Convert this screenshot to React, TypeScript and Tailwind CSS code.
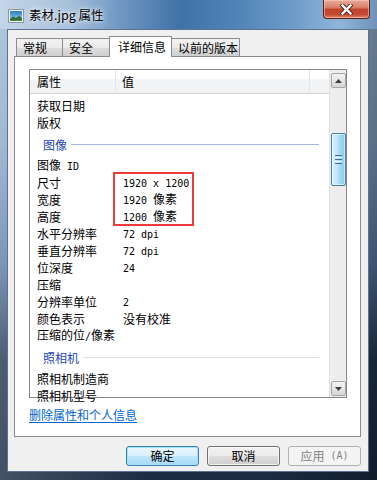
import React from "react";

type Item = { n?: string; v?: string; g?: string };

const items: Item[] = [
  { n: "获取日期" },
  { n: "版权" },
  { g: "图像" },
  { n: "图像 ID" },
  { n: "尺寸", v: "1920 x 1200" },
  { n: "宽度", v: "1920 像素" },
  { n: "高度", v: "1200 像素" },
  { n: "水平分辨率", v: "72 dpi" },
  { n: "垂直分辨率", v: "72 dpi" },
  { n: "位深度", v: "24" },
  { n: "压缩" },
  { n: "分辨率单位", v: "2" },
  { n: "颜色表示", v: "没有校准" },
  { n: "压缩的位/像素" },
  { g: "照相机" },
  { n: "照相机制造商" },
  { n: "照相机型号" },
];

function Mix({ s }: { s: string }) {
  const parts = s.split(/([\x20-\x7e]+)/).filter((p) => p.length > 0);
  return (
    <>
      {parts.map((p, i) =>
        /^[\x20-\x7e]+$/.test(p) ? (
          <span key={i} className="font-['DejaVu_Sans_Mono',monospace] text-[10px] whitespace-pre">
            {p}
          </span>
        ) : (
          <span key={i}>{p}</span>
        )
      )}
    </>
  );
}

function TitleIcon() {
  return (
    <svg width="16" height="14" viewBox="0 0 16 14">
      <rect x="0.5" y="0.5" width="15" height="13" fill="#f4f6f8" stroke="#8a96a3" />
      <defs>
        <linearGradient id="sky" x1="0" y1="0" x2="0" y2="1">
          <stop offset="0" stopColor="#2f7fc4" />
          <stop offset="1" stopColor="#9fd0ef" />
        </linearGradient>
      </defs>
      <rect x="2" y="2" width="12" height="10" fill="url(#sky)" />
      <path d="M2 10 L5 7.5 L8 9 L11 7 L14 9 L14 12 L2 12 Z" fill="#2f6b3a" />
      <path d="M2 11 L14 10.5 L14 12 L2 12 Z" fill="#4d8a3c" />
    </svg>
  );
}

function CloseX() {
  return (
    <svg width="13" height="11" viewBox="0 0 13 11">
      <path d="M2.5 1.5 L10.5 9.5 M10.5 1.5 L2.5 9.5" stroke="#4a2a22" strokeWidth="4.2" strokeLinecap="square" />
      <path d="M2.5 1.5 L10.5 9.5 M10.5 1.5 L2.5 9.5" stroke="#ffffff" strokeWidth="2.4" strokeLinecap="square" />
    </svg>
  );
}

function ArrowBtn({ up }: { up: boolean }) {
  return (
    <div className="h-[17px] w-[17px] p-[1px]">
      <div className="flex h-full w-full items-center justify-center rounded-[2px] border border-[#a5a5a5] bg-[linear-gradient(180deg,#f4f4f4_0%,#e6e6e6_50%,#d6d6d6_100%)]">
        <svg width="7" height="4" viewBox="0 0 7 4">
          {up ? <path d="M0 4 L3.5 0 L7 4 Z" fill="#3f3f3f" /> : <path d="M0 0 L3.5 4 L7 0 Z" fill="#3f3f3f" />}
        </svg>
      </div>
    </div>
  );
}

function Tab({ label, w, selected }: { label: string; w: number; selected?: boolean }) {
  if (selected) {
    return (
      <div
        style={{ width: w }}
        className="relative z-10 -mb-[1px] flex h-[21px] items-start whitespace-nowrap border border-b-0 border-[#898c95] bg-white pl-[8px] pt-[2px] text-[12px] leading-[16px] text-black"
      >
        {label}
      </div>
    );
  }
  return (
    <div
      style={{ width: w }}
      className="-ml-[1px] flex h-[18px] items-center whitespace-nowrap border border-b-0 border-[#898c95] bg-[linear-gradient(180deg,#f2f2f2_0%,#ebebeb_50%,#dddddd_51%,#cfcfcf_100%)] pl-[6px] text-[12px] leading-[16px] text-black first:ml-0"
    >
      {label}
    </div>
  );
}

export default function App() {
  return (
    <div className="relative flex h-[480px] w-[377px] flex-col overflow-hidden bg-[linear-gradient(90deg,rgba(255,255,255,0.18)_0%,rgba(255,255,255,0)_40%,rgba(0,0,0,0)_70%,rgba(0,0,0,0.35)_100%),linear-gradient(180deg,#9fbbd7_0%,#8aaacb_30%,#5f80a8_55%,#263a55_75%,#1b2b42_100%)] font-['Noto_Sans_CJK_SC','Microsoft_YaHei',sans-serif]">
      {/* Title bar */}
      <div className="flex h-[29px] shrink-0 items-start bg-[linear-gradient(90deg,#c3d5e8_0%,#a9c2dc_18%,#6f97c2_32%,#3f72a8_48%,#4f82b6_62%,#6e9cca_78%,#8fb6da_90%,#6f93b8_100%)]">
        <div className="ml-[8px] mt-[9px]">
          <TitleIcon />
        </div>
        <div className="ml-[5px] mt-[6px] text-[12.5px] leading-[17px] text-black [text-shadow:0_0_6px_rgba(255,255,255,0.9),0_0_3px_rgba(255,255,255,0.9)]">
          素材.jpg 属性
        </div>
        <div className="ml-auto mr-[7px] flex h-[19px] w-[47px] items-center justify-center rounded-b-[4px] border border-t-0 border-[#5a2218] bg-[linear-gradient(180deg,#e9ab9a_0%,#d97a64_45%,#c0432b_50%,#c44a31_80%,#e3866b_100%)] shadow-[inset_0_0_0_1px_rgba(255,210,200,0.5)]">
          <CloseX />
        </div>
      </div>

      {/* Client area */}
      <div className="ml-[7px] mr-[8px] flex h-[443px] shrink-0 flex-col border border-[#5d7290] bg-[#f0f0f0] pl-[6px] pr-[8px] pt-[6px]">
        {/* Tabs */}
        <div className="ml-[2px] flex h-[20px] items-end">
          <Tab label="常规" w={47} />
          <Tab label="安全" w={48} />
          <div className="-ml-[1px]">
            <Tab label="详细信息" w={63} selected />
          </div>
          <Tab label="以前的版本" w={69} />
        </div>

        {/* Panel */}
        <div className="flex h-[381px] w-[347px] flex-col border border-[#898c95] bg-white pl-[14px] pt-[12px]">
          {/* List */}
          <div className="relative flex h-[329px] w-[318px] border border-[#828790] bg-white">
            <div className="flex min-w-0 flex-1 flex-col">
              {/* Header */}
              <div className="flex h-[24px] shrink-0 items-center border-b border-[#d5d5d5] bg-[linear-gradient(180deg,#ffffff_0%,#ffffff_40%,#f3f4f6_41%,#f1f2f4_100%)] text-[12px] leading-[16px] text-black">
                <div className="flex h-full w-[86px] items-center border-r border-[#e3e5e8] pl-[7px]">属性</div>
                <div className="flex h-full w-[194px] items-center border-r border-[#e3e5e8] pl-[6px]">值</div>
              </div>
              {/* Rows */}
              <div className="flex flex-col pt-[3px] text-[12px] leading-[17px] text-black">
                {items.map((it, i) =>
                  it.g ? (
                    <div key={i} className="flex h-[26px] items-center pl-[13px] pr-[10px]">
                      <span className="text-[#1e46b4]">{it.g}</span>
                      <div
                        className={
                          i === 2
                            ? "ml-[4px] h-[1px] flex-1 bg-[#a3b8dc]"
                            : "ml-[4px] h-[1px] flex-1 bg-[#d9dfe8]"
                        }
                      />
                    </div>
                  ) : (
                    <div key={i} className="flex h-[17px] shrink-0 items-center">
                      <div className="w-[86px] whitespace-nowrap pl-[7px]">
                        <Mix s={it.n || ""} />
                      </div>
                      <div className="whitespace-nowrap pl-[7px]">{it.v ? <Mix s={it.v} /> : null}</div>
                    </div>
                  )
                )}
              </div>
            </div>
            {/* Scrollbar */}
            <div className="flex w-[17px] shrink-0 flex-col border-l border-[#e2e2e2] bg-[#ededed]">
              <div className="mt-[2px]">
                <ArrowBtn up />
              </div>
              <div className="relative flex-1">
                <div className="absolute left-[1px] top-[44px] flex h-[53px] w-[15px] flex-col items-center justify-center gap-[1px] rounded-[2px] border border-[#3c7fb1] bg-[linear-gradient(90deg,#d9f0fc_0%,#bfe4f8_45%,#a7d9f5_55%,#90cbeb_100%)] shadow-[inset_0_0_0_1px_rgba(255,255,255,0.6)]">
                  <div className="h-[1px] w-[7px] bg-[#3b6f97]" />
                  <div className="h-[1px] w-[7px] bg-[#e9f6fd]" />
                  <div className="h-[1px] w-[7px] bg-[#3b6f97]" />
                  <div className="h-[1px] w-[7px] bg-[#e9f6fd]" />
                  <div className="h-[1px] w-[7px] bg-[#3b6f97]" />
                </div>
              </div>
              <div>
                <ArrowBtn up={false} />
              </div>
            </div>
            {/* Red highlight */}
            <div className="pointer-events-none absolute left-[83px] top-[102px] h-[54px] w-[81px] border-2 border-[#ee3a3a]" />
          </div>

          <div className="mt-[9px] text-[12px] leading-[16px] text-[#0066cc] underline underline-offset-2">
            删除属性和个人信息
          </div>
        </div>

        {/* Buttons */}
        <div className="mt-[9px] flex justify-end gap-[8px] text-[12px] leading-[16px]">
          <div className="flex h-[20px] w-[73px] items-center justify-center rounded-[3px] border border-[#3c7fb1] bg-[linear-gradient(180deg,#eaf6fd_0%,#d9f0fc_50%,#bee6fd_51%,#a7d9f5_100%)] text-black shadow-[inset_0_0_0_1px_#9fe4fb]">
            确定
          </div>
          <div className="flex h-[20px] w-[73px] items-center justify-center rounded-[3px] border border-[#707070] bg-[linear-gradient(180deg,#f2f2f2_0%,#ebebeb_50%,#dddddd_51%,#cfcfcf_100%)] text-black shadow-[inset_0_0_0_1px_rgba(255,255,255,0.7)]">
            取消
          </div>
          <div className="-mr-[1px] flex h-[20px] w-[73px] items-center justify-center rounded-[3px] border border-[#adb2b5] bg-[#f4f4f4] text-[#838383]">
            应用<Mix s=" (A)" />
          </div>
        </div>
      </div>
    </div>
  );
}
